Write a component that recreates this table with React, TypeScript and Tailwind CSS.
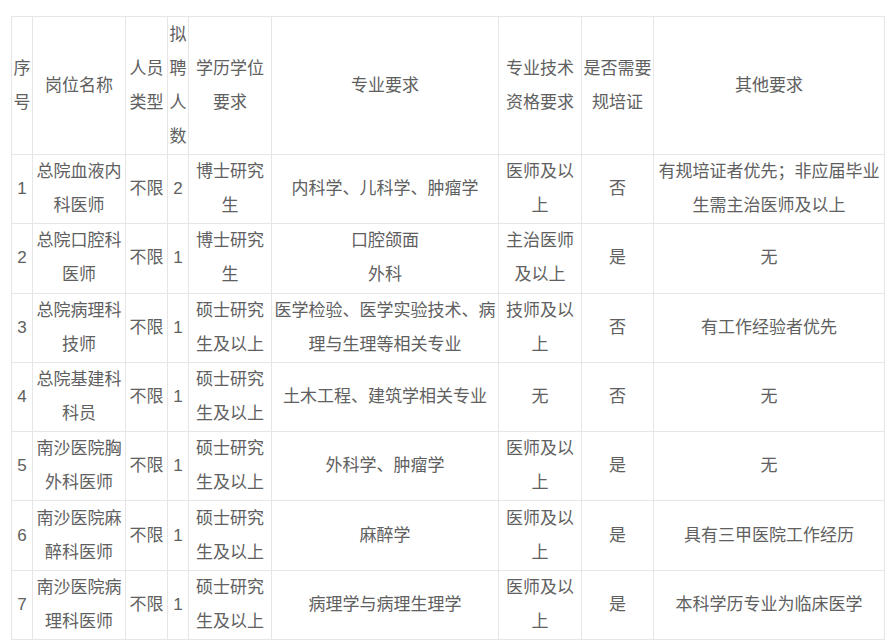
import React from "react";

const cols = [21, 93, 42, 21, 83, 227, 83, 72, 231];

const rows: React.ReactNode[][] = [
  ["1", "总院血液内科医师", "不限", "2", "博士研究生", "内科学、儿科学、肿瘤学", "医师及以上", "否", "有规培证者优先；非应届毕业生需主治医师及以上"],
  ["2", "总院口腔科医师", "不限", "1", "博士研究生", <>口腔颌面<br />外科</>, "主治医师及以上", "是", "无"],
  ["3", "总院病理科技师", "不限", "1", "硕士研究生及以上", "医学检验、医学实验技术、病理与生理等相关专业", "技师及以上", "否", "有工作经验者优先"],
  ["4", "总院基建科科员", "不限", "1", "硕士研究生及以上", "土木工程、建筑学相关专业", "无", "否", "无"],
  ["5", "南沙医院胸外科医师", "不限", "1", "硕士研究生及以上", "外科学、肿瘤学", "医师及以上", "是", "无"],
  ["6", "南沙医院麻醉科医师", "不限", "1", "硕士研究生及以上", "麻醉学", "医师及以上", "是", "具有三甲医院工作经历"],
  ["7", "南沙医院病理科医师", "不限", "1", "硕士研究生及以上", "病理学与病理生理学", "医师及以上", "是", "本科学历专业为临床医学"],
];

const headers = ["序号", "岗位名称", "人员类型", "拟聘人数", "学历学位要求", "专业要求", "专业技术资格要求", "是否需要规培证", "其他要求"];

export default function App() {
  return (
    <div
      className="w-[890px] h-[644px] bg-white pl-[11px] pt-[16px] overflow-hidden"
      style={{ fontFamily: '"Liberation Sans", "Noto Sans CJK SC", sans-serif' }}
    >
      <table className="table-fixed border-collapse text-[17px] leading-[34px] text-[#606060] w-[873px]">
        <colgroup>
          {cols.map((w, i) => (
            <col key={i} style={{ width: w }} />
          ))}
        </colgroup>
        <tbody>
          <tr className="h-[138px]">
            {headers.map((h, i) => (
              <td key={i} className="border border-[#e6e6e6] px-[1px] py-0 text-center align-middle break-all">
                {h}
              </td>
            ))}
          </tr>
          {rows.map((r, ri) => (
            <tr key={ri} className="h-[69.3px]">
              {r.map((c, ci) => (
                <td key={ci} className="border border-[#e6e6e6] px-[1px] py-0 text-center align-middle break-all">
                  {c}
                </td>
              ))}
            </tr>
          ))}
        </tbody>
      </table>
    </div>
  );
}
